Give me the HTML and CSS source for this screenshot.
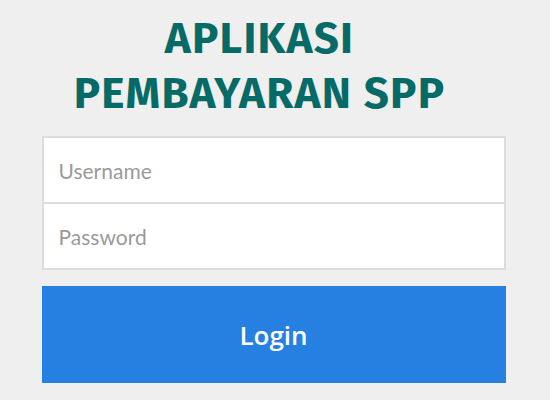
FILE: index.html
```html
<!DOCTYPE html>
<html lang="id">
<head>
    <meta charset="UTF-8">
    <meta name="viewport" content="width=device-width, initial-scale=1.0">
    <title>Aplikasi Pembayaran SPP</title>
    <link rel="stylesheet" href="styles.css">
</head>
<body>
    <section class="login-box">
        <h1 class="app-title">APLIKASI<br>PEMBAYARAN SPP</h1>
        <form class="login-form">
            <div class="input-group">
                <input type="text" class="form-input" placeholder="Username">
                <input type="password" class="form-input" placeholder="Password">
            </div>
            <button type="button" class="login-btn">Login</button>
        </form>
    </section>
</body>
</html>
```

FILE: styles.css
```css
body {
    font-family: "Open Sans", Arial, sans-serif;
    background-color: #efefef;
    margin: 0;
    padding: 0 3px 0 0;
}

.login-box {
    width: 464px;
    margin: 0 auto;
    padding-top: 11px;
}

.app-title {
    font-family: "Fira Sans", "Noto Sans", sans-serif;
    font-weight: 700;
    font-size: 44px;
    line-height: 55px;
    color: #066b66;
    text-align: center;
    letter-spacing: 1.2px;
    margin: 0 0 15px;
    padding-right: 28px;
}

.login-form {
    display: flex;
    flex-direction: column;
    gap: 16px;
}

.input-group {
    display: flex;
    flex-direction: column;
    border: 2px solid #dcdcdc;
    background: #fff;
}

.form-input {
    height: 64px;
    border: none;
    padding: 0 15px;
    font-family: Lato, sans-serif;
    font-size: 21px;
    color: #555;
    background: #fff;
    outline: none;
}

.form-input + .form-input {
    border-top: 2px solid #dcdcdc;
}

.form-input::placeholder {
    color: #9a9a9a;
}

.login-btn {
    height: 97px;
    border: none;
    background-color: #2680e2;
    color: #fff;
    font-family: "Open Sans", sans-serif;
    font-weight: 600;
    font-size: 26px;
    cursor: pointer;
}
```
